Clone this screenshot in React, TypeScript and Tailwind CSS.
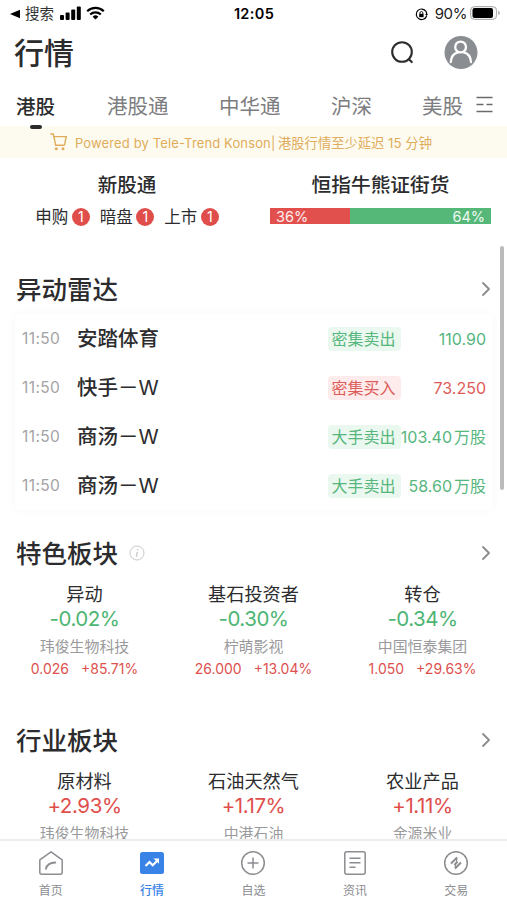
import { ChevronRight } from "lucide-react"

const tabs = [
  { name: "港股通", className: "ml-[52px] w-[62px]" },
  { name: "中华通", className: "ml-[50px] w-[62px]" },
  { name: "沪深", className: "ml-[50px] w-[41px]" },
  { name: "美股", className: "ml-[50px] w-[41px]" },
]

const radar = [
  { name: "安踏体育", tag: "密集卖出", value: "110.90", buy: false },
  { name: "快手", suffix: "－W", tag: "密集买入", value: "73.250", buy: true },
  { name: "商汤", suffix: "－W", tag: "大手卖出", value: "103.40", unit: "万股", buy: false },
  { name: "商汤", suffix: "－W", tag: "大手卖出", value: "58.60", unit: "万股", buy: false },
]

type Sector = { name: string; pct: string; stock: string; price?: string; change?: string }

const featured: Sector[] = [
  { name: "异动", pct: "-0.02%", stock: "玮俊生物科技", price: "0.026", change: "+85.71%" },
  { name: "基石投资者", pct: "-0.30%", stock: "柠萌影视", price: "26.000", change: "+13.04%" },
  { name: "转仓", pct: "-0.34%", stock: "中国恒泰集团", price: "1.050", change: "+29.63%" },
]

const industries: Sector[] = [
  { name: "原材料", pct: "+2.93%", stock: "玮俊生物科技" },
  { name: "石油天然气", pct: "+1.17%", stock: "中港石油" },
  { name: "农业产品", pct: "+1.11%", stock: "金源米业" },
]

function StatusBar() {
  return (
    <div className="h-7 shrink-0 flex items-center justify-between pl-[10px] pr-[6px] text-black">
      <div className="flex w-[200px] items-center">
        <svg className="w-[10px] h-[10px]" viewBox="0 0 10 10"><path d="M0 5 10 .8v8.4z" /></svg>
        <span className="ml-[5px] text-[14.5px] leading-none text-[#333]">搜索</span>
        <svg className="ml-[6px] -mt-[2px] w-[21px] h-[14px]" viewBox="0 0 21 14">
          <rect x="0" y="9" width="4" height="5" rx="1" />
          <rect x="5.6" y="6.5" width="4" height="7.5" rx="1" />
          <rect x="11.2" y="3.5" width="4" height="10.5" rx="1" />
          <rect x="16.8" y="0.5" width="4" height="13.5" rx="1" />
        </svg>
        <svg className="ml-[5px] -mt-[2px] w-[19px] h-[14px]" viewBox="0 0 19 14" fill="none" stroke="black" strokeWidth="2.2">
          <path d="M1.2 5.2a12 12 0 0 1 16.6 0" />
          <path d="M4.2 8.5a7.6 7.6 0 0 1 10.6 0" />
          <path d="M9.5 13.6 6.6 10.7a4.2 4.2 0 0 1 5.8 0z" fill="black" stroke="none" />
        </svg>
      </div>
      <span className="-ml-[3px] text-[14.5px] font-semibold tracking-[0.35px]">12:05</span>
      <div className="flex w-[200px] items-center justify-end">
        <svg className="w-[13px] h-[13px]" viewBox="0 0 13 13" fill="none" stroke="black" strokeWidth="1.2">
          <path d="M11 3.4A5.3 5.3 0 1 0 11.6 8" />
          <path d="M10 6h3l-1.4 2z" fill="black" stroke="none" />
          <path d="M11 3.4A5.3 5.3 0 0 1 11.7 6" />
          <rect x="4.2" y="5.8" width="4.4" height="3.4" fill="black" stroke="none" />
          <path d="M5 6V4.9a1.4 1.4 0 0 1 2.8 0V6" strokeWidth="0.9" />
        </svg>
        <span className="ml-[7px] text-[15px] tracking-[-0.4px] text-[#222]">90%</span>
        <svg className="ml-[3px] -mt-[2px] w-[31px] h-[14px]" viewBox="0 0 31 14">
          <rect x="0.6" y="0.6" width="26" height="12.8" rx="3.8" fill="#f5f5f5" stroke="#a5a5a5" />
          <rect x="2.5" y="2" width="20.5" height="10" rx="2" />
          <path d="M28.3 4.8c2 .6 2 3.8 0 4.4z" fill="#a5a5a5" />
        </svg>
      </div>
    </div>
  )
}

function Header() {
  return (
    <div className="h-[50px] shrink-0 flex items-center pl-[14px] pr-[29px]">
      <h1 className="flex-1 text-[30px] leading-none font-medium text-[#2c2c2e]">行情</h1>
      <svg className="w-[24px] h-[24px]" viewBox="0 0 24 24" fill="none" stroke="#2c2c2e" strokeWidth="2.1" strokeLinecap="round">
        <circle cx="12" cy="11" r="9.8" />
        <path d="m19.4 18.7 2.4 2.4" />
      </svg>
      <svg className="ml-[30px] w-[34px] h-[34px]" viewBox="0 0 34 34" fill="none" stroke="white" strokeWidth="2.3" strokeLinecap="round">
        <circle cx="17" cy="16.5" r="16.5" fill="#8a8d92" stroke="none" />
        <circle cx="16.6" cy="11" r="5.4" />
        <path d="M6.8 26c.5-5.6 3.5-9 7.2-9.7M19.8 16.3c3.7.7 6.7 4.1 7.2 9.7" />
      </svg>
    </div>
  )
}

function Tabs() {
  return (
    <div className="h-12 shrink-0 flex items-center pl-4 pt-[11px] text-[20.5px] leading-none text-[#7d7d7f]">
      <div className="relative w-[39px] text-[19.5px] font-medium text-[#2c2c2e]">
        港股
        <span className="absolute z-10 left-[14px] top-[27px] h-[4px] w-[12px] rounded-full bg-[#2c2c2e]" />
      </div>
      {tabs.map((t) => (
        <div key={t.name} className={`${t.className} whitespace-nowrap`}>{t.name}</div>
      ))}
      <svg className="ml-[13px] -mt-[6px] w-[17px] h-[17px]" viewBox="0 0 17 17" stroke="#6b6b6e" strokeWidth="1.6">
        <path d="M.5 1.5h16M.5 8.5h7M10.5 8.5h6M.5 15.5h16" />
      </svg>
    </div>
  )
}

function Banner() {
  return (
    <div className="h-8 shrink-0 flex items-center pl-[50px] pt-[2px] bg-[#fdfbef] text-[#dfac5c]">
      <svg className="-mt-[2px] w-[17px] h-[18px]" viewBox="0 0 17 18" fill="none" stroke="currentColor" strokeWidth="1.4">
        <path d="M.3 1h3l2.4 11.2h8.8M3.9 3.6h12.3l-1.7 8.6" />
        <circle cx="6.3" cy="15.7" r="1.5" fill="currentColor" stroke="none" />
        <circle cx="13" cy="15.7" r="1.5" fill="currentColor" stroke="none" />
      </svg>
      <span className="ml-2 w-[203px] whitespace-nowrap pt-px text-[13px] tracking-[0.13px]">Powered by Tele-Trend Konson|</span>
      <span className="whitespace-nowrap pt-px text-[13.3px]">港股行情至少延迟 15 分钟</span>
    </div>
  )
}

function Summary() {
  return (
    <div className="h-[88px] shrink-0 flex pt-4 text-[#2c2c2e]">
      <div className="w-[254px] flex flex-col items-center">
        <div className="h-[22px] text-[19.5px] leading-[22px] font-medium">新股通</div>
        <div className="mt-[11px] flex h-5 items-center gap-[10px] text-[16.5px] leading-none">
          {["申购", "暗盘", "上市"].map((s) => (
            <div key={s} className="flex items-center gap-[3.5px]">
              {s}
              <span className="w-[18px] h-[18px] rounded-full bg-[#e04e4b] text-white text-[14px] leading-[18px] text-center">1</span>
            </div>
          ))}
        </div>
      </div>
      <div className="w-[253px] flex flex-col items-center">
        <div className="h-[22px] text-[19.7px] leading-[22px] font-medium">恒指牛熊证街货</div>
        <div className="mt-[12px] flex h-4 w-[221px] text-[14.5px] leading-[17px] text-white/90">
          <div className="w-[36%] bg-[#e2504d] pl-[6px]">36%</div>
          <div className="flex-1 bg-[#55b878] pr-[6px] text-right">64%</div>
        </div>
      </div>
    </div>
  )
}

function SectionTitle({ title, info }: { title: string; info?: boolean }) {
  return (
    <div className="h-[34px] shrink-0 flex items-center pl-4 pr-[9px]">
      <h2 className="text-[25.5px] leading-none pt-[2px] font-medium text-[#2c2c2e]">{title}</h2>
      {info && (
        <svg className="ml-[11px] w-4 h-4" viewBox="0 0 16 16" fill="none" stroke="#c9c9c9">
          <circle cx="8" cy="8" r="7" />
          <path d="M8.8 4v1.3M8.3 6.8 7.4 11.8" strokeWidth="1.3" />
        </svg>
      )}
      <ChevronRight className="ml-auto w-[24px] h-[24px] text-[#8b8b8e]" strokeWidth={1.8} />
    </div>
  )
}

function Radar() {
  return (
    <div className="ml-[15px] mr-[14px] mt-2 h-[196px] shrink-0 rounded bg-white shadow-[0_0_8px_rgba(0,0,0,0.04)]">
      {radar.map((r, i) => (
        <div key={i} className="h-[49px] flex items-center pl-[7px] pr-[7px]">
          <span className="w-[55px] pt-px text-[15.5px] tracking-[0.4px] text-[#a3a3a5]">11:50</span>
          <span className="flex-1 whitespace-nowrap pt-[2px] text-[20.5px] leading-none font-medium text-[#2c2c2e]">
            {r.name}
            <span className="font-normal">{r.suffix}</span>
          </span>
          <span
            className={
              r.buy
                ? "h-6 w-[73px] rounded bg-[#fdeceb] pr-[2px] text-center text-[16px] leading-6 text-[#de5b59]"
                : "h-6 w-[73px] rounded bg-[#ebf8f0] pr-[2px] text-center text-[16px] leading-6 text-[#56b67d]"
            }
          >
            {r.tag}
          </span>
          <span
            className={
              r.buy
                ? "w-[85px] flex justify-end whitespace-nowrap pt-px text-[16px] text-[#de5b59]"
                : "w-[85px] flex justify-end whitespace-nowrap pt-px text-[16px] text-[#56b67d]"
            }
          >
            {r.value}
            {r.unit && <span className="ml-[2px]">{r.unit}</span>}
          </span>
        </div>
      ))}
    </div>
  )
}

function Sectors({ items }: { items: Sector[] }) {
  return (
    <div className="grid shrink-0 grid-cols-3 text-center">
      {items.map((s) => (
        <div key={s.name} className="flex flex-col items-center">
          <div className="h-[26px] text-[18.2px] leading-[26px] text-[#2c2c2e]">{s.name}</div>
          <div
            className={
              s.pct.startsWith("-")
                ? "h-6 text-[20.5px] leading-6 tracking-[-0.5px] text-[#4db573]"
                : "h-6 text-[20.5px] leading-6 tracking-[-0.4px] text-[#e04e4b]"
            }
          >
            {s.pct}
          </div>
          <div className="mt-[5px] h-[22px] text-[14.9px] leading-[22px] text-[#9a9a9c]">{s.stock}</div>
          {s.price && (
            <div className="flex h-[22px] gap-3 text-[14px] leading-[22px] text-[#dd504e]">
              <span>{s.price}</span>
              <span>{s.change}</span>
            </div>
          )}
        </div>
      ))}
    </div>
  )
}

function BottomNav() {
  return (
    <nav className="h-[61px] shrink-0 grid grid-cols-5 border-t-2 border-[#ececed] bg-white text-[12px] text-[#8b8d91]">
      <div className="flex flex-col items-center pt-[9px]">
        <svg className="w-[26px] h-[26px]" viewBox="0 0 26 26" fill="none" stroke="currentColor" strokeWidth="1.5" strokeLinejoin="round" strokeLinecap="round">
          <path d="M1.8 9.8 13 1.8l11.2 8v12.4a2 2 0 0 1-2 2H3.8a2 2 0 0 1-2-2z" />
          <path d="M8 18.8c.7-3.8 4-6.1 9.3-6.3" strokeWidth="1.8" />
        </svg>
        <span className="mt-[6px] leading-[18px]">首页</span>
      </div>
      <div className="flex flex-col items-center pt-[9px] text-[#3a83e6]">
        <svg className="w-[26px] h-[26px]" viewBox="0 0 26 26" fill="none">
          <rect x="1" y="2" width="24" height="22" rx="2.5" fill="#3a83e6" />
          <path d="m6.5 16 4-4 3.2 3.2 5-5" stroke="white" strokeWidth="2.2" />
          <path d="M14.5 8.5h5.5v5.2z" fill="white" />
        </svg>
        <span className="mt-[6px] leading-[18px] font-medium">行情</span>
      </div>
      <div className="flex flex-col items-center pt-[9px]">
        <svg className="w-[26px] h-[26px]" viewBox="0 0 26 26" fill="none" stroke="currentColor" strokeWidth="1.5">
          <circle cx="13" cy="13" r="11.3" />
          <path d="M13 7.5v11M7.5 13h11" />
        </svg>
        <span className="mt-[6px] leading-[18px]">自选</span>
      </div>
      <div className="flex flex-col items-center pt-[9px]">
        <svg className="w-[26px] h-[26px]" viewBox="0 0 26 26" fill="none" stroke="currentColor" strokeWidth="1.5">
          <rect x="2.8" y="1.8" width="20.4" height="22.4" rx="2" />
          <path d="M7.5 8.2h11M7.5 12.7h11M7.5 17.2h6" />
        </svg>
        <span className="mt-[6px] leading-[18px]">资讯</span>
      </div>
      <div className="flex flex-col items-center pt-[9px]">
        <svg className="w-[26px] h-[26px]" viewBox="0 0 26 26" fill="none" stroke="currentColor" strokeWidth="1.5">
          <circle cx="13" cy="13" r="11.3" />
          <path d="m8 13.5 6-6M18 12.5l-6 6M11.5 15l3-3.5" strokeWidth="2" />
          <path d="M13.6 7.5v3.5M12.4 18.5v-3.5" strokeWidth="1.3" />
        </svg>
        <span className="mt-[6px] leading-[18px]">交易</span>
      </div>
    </nav>
  )
}

export default function App() {
  return (
    <div className="relative w-[507px] h-[900px] flex flex-col overflow-hidden bg-white font-['Inter','Noto_Sans_CJK_SC',sans-serif]">
      <StatusBar />
      <Header />
      <Tabs />
      <Banner />
      <div className="flex-1 min-h-0 flex flex-col overflow-hidden">
        <Summary />
        <div className="mt-[26px] flex shrink-0 flex-col">
          <SectionTitle title="异动雷达" />
          <Radar />
        </div>
        <div className="mt-[26px] flex shrink-0 flex-col">
          <SectionTitle title="特色板块" info />
          <div className="h-[11px]" />
          <Sectors items={featured} />
        </div>
        <div className="mt-[43px] flex shrink-0 flex-col">
          <SectionTitle title="行业板块" />
          <div className="h-[11px]" />
          <Sectors items={industries} />
        </div>
      </div>
      <BottomNav />
      {/* scroll indicator */}
      <div className="absolute left-[500px] top-[246px] h-[244px] w-[4px] rounded-full bg-[#bbbbbb]" />
    </div>
  )
}
